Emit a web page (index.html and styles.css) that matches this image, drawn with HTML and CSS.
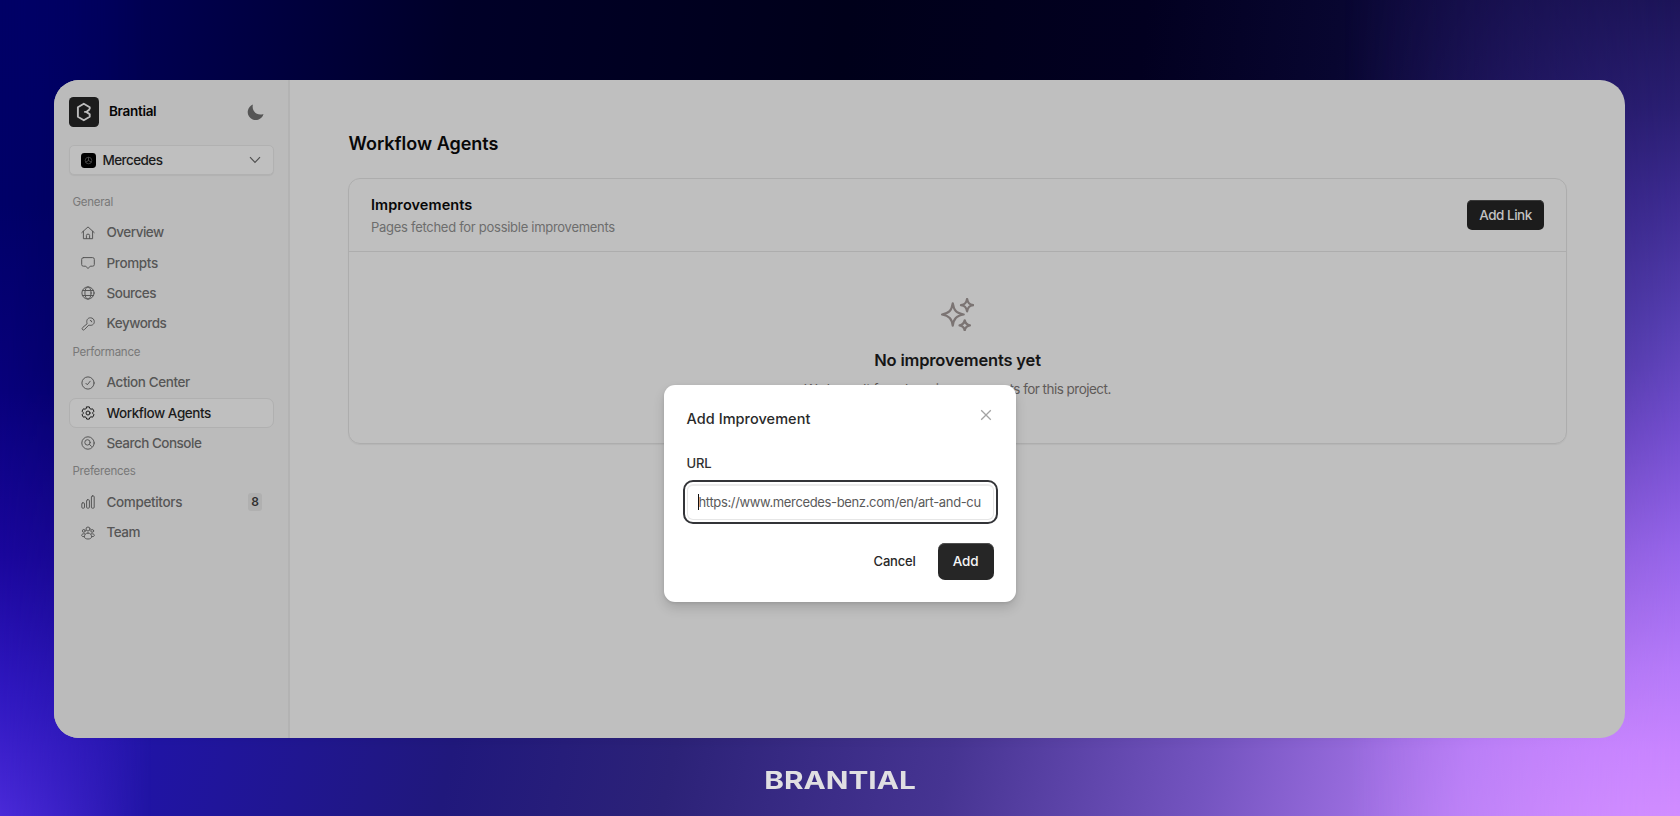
FILE: index.html
```html
<!DOCTYPE html>
<html lang="en">
<head>
<meta charset="utf-8">
<title>Brantial</title>
<link rel="stylesheet" href="styles.css">
</head>
<body>
<div class="stage">
  <div class="glow glow-bottom"></div>
  <div class="glow glow-left"></div>
  <div class="glow glow-right"></div>
  <div class="window">
    <aside class="sidebar">
      <div class="brand">
        <svg class="brand-logo" viewBox="0 0 30 30"><rect width="30" height="30" rx="4.5" fill="#1c1c1c"/><path d="M20.7 12.2V10.3L14.8 6.8L8.9 10.2V19.7L14.8 23.2L20.7 19.8V17.2L17.3 14.9L20.7 12.2M17.3 14.9H15.2" fill="none" stroke="#bcbcbc" stroke-width="1.9" stroke-linejoin="round"/></svg>
        <span class="brand-name">Brantial</span>
        <svg class="moon" viewBox="0 0 16 16"><path d="M4.9.6A8 8 0 1 0 15.5 9.9C10 12.200 3.200 7.800 4.900.6Z" fill="#555"/></svg>
      </div>
      <div class="project">
        <svg class="project-logo" viewBox="0 0 15 15"><rect width="15" height="15" rx="3.4" fill="#000"/><circle cx="7.5" cy="7.5" r="3.3" fill="none" stroke="#555" stroke-width=".7"/><path d="M7.5 4.2V7.5L4.7 9.2M7.5 7.5L10.3 9.2" fill="none" stroke="#666" stroke-width=".7"/></svg>
        <span class="project-name">Mercedes</span>
        <svg class="chevron" viewBox="0 0 12 8"><path d="M1 1.2L6 6.4L11 1.2" fill="none" stroke="#505050" stroke-width="1.2"/></svg>
      </div>
      <nav class="nav">
        <h4 class="group">General</h4>
        <a class="item"><svg class="icon" viewBox="0 0 14 14"><path d="M.8 6.6L7 .9L13.2 6.6M2.4 5.3V12.7H11.6V5.3M5.4 12.6V9.4Q5.4 8.1 7 8.1T8.6 9.4V12.6"/></svg><span>Overview</span></a>
        <a class="item"><svg class="icon" viewBox="0 0 14 14"><path d="M2.4 1.6H11.6Q13.3 1.6 13.3 3.3V8.6Q13.3 10.2 11.6 10.2H9.2L7 12.6L4.8 10.2H2.4Q.7 10.2.7 8.6V3.3Q.7 1.6 2.4 1.6Z"/></svg><span class="prompts">Prompts</span></a>
        <a class="item"><svg class="icon" viewBox="0 0 14 14"><circle cx="7" cy="7" r="6.1"/><ellipse cx="7" cy="7" rx="3.1" ry="6.1"/><path d="M1.6 4.5H12.4M1.6 9.5H12.4"/></svg><span>Sources</span></a>
        <a class="item"><svg class="icon" viewBox="0 0 14 14"><path d="M6 6.4C5 3.3 6.7.8 9.4.8C11.7.8 13.3 2.4 13.3 4.7C13.3 7.5 10.7 9 7.8 8.1L3.4 12.6Q2.5 13.5 1.5 12.6Q.6 11.6 1.5 10.7ZM9.3 3.4Q10.7 3.3 10.8 4.8"/></svg><span>Keywords</span></a>
        <h4 class="group">Performance</h4>
        <a class="item"><svg class="icon" viewBox="0 0 14 14"><circle cx="7" cy="7" r="6.1"/><path d="M4.9 7.3L6.3 8.8L9.2 5.2"/></svg><span class="action">Action Center</span></a>
        <a class="item active"><svg class="icon" viewBox="0 0 14 14"><path d="M5.7.9H8.3L8.8 2.5L10 3.2L11.6 2.8L13 5.2L11.8 6.4V7.6L13 8.8L11.6 11.2L10 10.8L8.8 11.5L8.3 13.1H5.7L5.2 11.5L4 10.8L2.4 11.2L1 8.8L2.2 7.6V6.4L1 5.2L2.4 2.8L4 3.2L5.2 2.5Z"/><circle cx="7" cy="7" r="2"/></svg><span>Workflow Agents</span></a>
        <a class="item"><svg class="icon" viewBox="0 0 14 14"><circle cx="7" cy="7" r="6.2"/><circle cx="6.5" cy="6.4" r="2.7"/><path d="M8.5 8.4L10.5 10.4"/></svg><span>Search Console</span></a>
        <h4 class="group">Preferences</h4>
        <a class="item"><svg class="icon" viewBox="0 0 14 14"><rect x=".8" y="7.8" width="2.7" height="5.4" rx="1"/><rect x="5.6" y="4.7" width="2.8" height="8.5" rx="1"/><rect x="10.4" y=".9" width="2.8" height="12.3" rx="1"/></svg><span class="competitors">Competitors</span><b class="count">8</b></a>
        <a class="item"><svg class="icon" viewBox="0 0 14 14"><circle cx="7" cy="3" r="2"/><circle cx="2.8" cy="4.9" r="1.4"/><circle cx="11.2" cy="4.9" r="1.4"/><path d="M7 7C4.6 7 3.5 8.7 3.4 10.8C3.4 12.2 5 13 7 13S10.6 12.2 10.6 10.8C10.5 8.7 9.4 7 7 7ZM3.8 7.8H2.4C1.3 7.8.7 8.6.7 9.6Q.7 10.8 3.2 10.7M10.2 7.8H11.6C12.7 7.8 13.3 8.6 13.3 9.6Q13.3 10.8 10.8 10.7"/></svg><span>Team</span></a>
      </nav>
    </aside>
    <main class="main">
      <h1 class="title">Workflow Agents</h1>
      <section class="card">
        <header class="card-head">
          <div class="card-text">
            <h2 class="card-title">Improvements</h2>
            <p class="card-sub">Pages fetched for possible improvements</p>
          </div>
          <button class="btn-link">Add Link</button>
        </header>
        <div class="empty">
          <svg class="sparkles" viewBox="0 0 32 32"><path d="M11.4 5.2C12.5 12 14.6 14.5 22 16C14.6 17.5 12.5 20 11.4 26.8C10.3 20 8.2 17.5 1 16C8.2 14.5 10.3 12 11.4 5.2ZM25.3 1C26 5 27.3 6.3 31.2 7C27.3 7.7 26 9 25.3 13C24.6 9 23.3 7.7 19.4 7C23.3 6.3 24.6 5 25.3 1ZM23 21.6C23.6 24.9 24.7 26 28 26.5C24.7 27 23.6 28.1 23 31.4C22.4 28.1 21.3 27 18 26.5C21.3 26 22.4 24.9 23 21.6Z"/></svg>
          <h3 class="empty-title">No improvements yet</h3>
          <p class="empty-text">We haven't found any improvements for this project.</p>
        </div>
      </section>
    </main>
  </div>
  <div class="wordmark"><span>BRANTIAL</span></div>
  <div class="dialog">
    <div class="dialog-head">
      <h2 class="dialog-title">Add Improvement</h2>
      <svg class="close" viewBox="0 0 12 12"><path d="M1.2 1.2L10.8 10.8M10.8 1.2L1.2 10.8" fill="none" stroke="#a3a3a3" stroke-width="1.3"/></svg>
    </div>
    <label class="label">URL</label>
    <div class="field"><div class="field-inner"><i class="caret"></i><span class="url">https://www.mercedes-benz.com/en/art-and-cu</span></div></div>
    <div class="actions">
      <button class="btn-cancel">Cancel</button>
      <button class="btn-add">Add</button>
    </div>
  </div>
</div>
</body>
</html>
```
FILE: styles.css
```css
* { box-sizing: border-box; }
body { margin: 0; font-family: Inter, "Liberation Sans", sans-serif; }
h1, h2, h3, h4, p { margin: 0; }
button { border: 0; padding: 0; font-family: inherit; }

.stage {
  position: relative;
  width: 1680px;
  height: 816px;
  overflow: hidden;
  padding: 80px 55px 0 54px;
  background: linear-gradient(96deg, #000066 0%, #000048 12%, #000028 26%, #00001a 48%, #020020 65%, #080630 76%, #160f4c 86%, #221866 100%);
}
.glow { position: absolute; inset: 0; }
.glow-bottom {
  background: linear-gradient(102deg, #4628d4 0%, #2c16b8 8%, #2014a4 17%, #20187c 33%, #2c2278 45%, #463492 60%, #7454c0 74%, #b27cf2 88%, #cf8cff 100%);
  -webkit-mask-image: linear-gradient(180deg, transparent 45%, #000 92%);
  mask-image: linear-gradient(180deg, transparent 45%, #000 92%);
}
.glow-left {
  background: linear-gradient(180deg, #000066 0%, #000068 25%, #08007c 48%, #1a069c 68%, #3018c0 85%, #4a2ad8 100%);
  -webkit-mask-image: linear-gradient(90deg, #000 0, transparent 9%);
  mask-image: linear-gradient(90deg, #000 0, transparent 9%);
}
.glow-right {
  background: linear-gradient(180deg, #1c1458 0%, #2a1e72 13%, #3c2a90 24%, #5840b4 40%, #744ed0 53%, #9664ea 67%, #b67afa 82%, #c884ff 92%, #d08cff 100%);
  -webkit-mask-image: linear-gradient(90deg, transparent 80%, #000 100%);
  mask-image: linear-gradient(90deg, transparent 80%, #000 100%);
}

.window {
  position: relative;
  display: flex;
  height: 658px;
  border-radius: 25px;
  overflow: hidden;
  background: #bfbfbf;
}
.sidebar {
  flex: none;
  width: 236px;
  padding: 17px 14px 0 15px;
  background: #bbb;
  border-right: 2px solid #b3b3b3;
}
.brand { display: flex; align-items: center; height: 30px; }
.brand-logo { width: 30px; height: 30px; }
.brand-name { margin: -2px 0 0 10px; font-size: 13.5px; font-weight: 600; color: #050505; letter-spacing: -.3px; }
.moon { width: 16px; height: 16px; margin: 0 10px 0 auto; overflow: visible; }
.project {
  display: flex;
  align-items: center;
  height: 30px;
  margin-top: 18px;
  padding: 0 12.5px 0 11px;
  border: 1px solid #b1b1b1;
  border-radius: 5px;
  background: #bfbfbf;
  box-shadow: 0 1px 1px rgba(0, 0, 0, .05);
}
.project-logo { width: 15px; height: 15px; }
.project-name { margin-left: 6.5px; font-size: 13.5px; font-weight: 500; color: #1c1c1c; letter-spacing: -.58px; }
.chevron { width: 12px; height: 8px; margin-left: auto; }
.nav { display: flex; flex-direction: column; padding-top: 14px; }
.group {
  height: 26.7px;
  margin-bottom: 2px;
  padding-left: 3.5px;
  font-size: 11.5px;
  line-height: 26.7px;
  font-weight: 400;
  letter-spacing: -.25px;
  color: #787878;
}
.item {
  display: flex;
  align-items: center;
  height: 30.3px;
  padding: 0 12px 0 11px;
  border: 1px solid transparent;
  border-radius: 7px;
  font-size: 13.5px;
  font-weight: 500;
  letter-spacing: -.5px;
  color: #565656;
}
.item span { margin-top: -1px; }
.prompts { letter-spacing: -.35px; }
.action { letter-spacing: -.42px; }
.competitors { letter-spacing: -.35px; }
.active { color: #1b1b1b; background: #bfbfbf; border-color: #b0b0b0; letter-spacing: -.43px; }
.icon { flex: none; width: 14px; height: 14px; margin-right: 11.5px; fill: none; stroke: currentColor; stroke-width: 1; stroke-linejoin: round; stroke-linecap: round; }
.count {
  width: 14px;
  height: 18px;
  margin: 0 -1px 0 auto;
  border-radius: 3px;
  background: #b0b0b0;
  font-size: 12px;
  line-height: 18px;
  font-weight: 600;
  letter-spacing: 0;
  text-align: center;
  color: #303030;
}

.main { flex: 1; padding: 49px 58px 0 58px; }
.title { height: 30px; padding-left: .5px; font-size: 18px; line-height: 30px; font-weight: 600; color: #080808; }
.card { height: 266px; margin-top: 19px; border: 1px solid #adadad; border-radius: 12px; box-shadow: 0 1px 1px rgba(0, 0, 0, .05); }
.card-head { display: flex; align-items: center; justify-content: space-between; height: 73px; padding: 0 22px; border-bottom: 1px solid #adadad; }
.card-text { padding-top: 2px; }
.card-title { font-size: 14.5px; line-height: 22px; font-weight: 600; letter-spacing: .08px; color: #080808; }
.card-sub { font-size: 13px; line-height: 22px; letter-spacing: -.28px; color: #6d6d6d; }
.btn-link { width: 77px; height: 30px; border-radius: 5px; background: #1c1c1c; box-shadow: inset 0 1px 0 #3a3a3a; color: #c2c2c2; font-size: 13.5px; font-weight: 500; letter-spacing: -.5px; }
.empty { display: flex; flex-direction: column; align-items: center; padding-top: 46px; }
.sparkles { width: 33px; height: 33px; fill: none; stroke: #7b7473; stroke-width: 2.2; stroke-linejoin: round; }
.empty-title { margin-top: 17px; font-size: 16.5px; line-height: 24px; font-weight: 600; letter-spacing: -.17px; color: #161616; }
.empty-text { margin-top: 7px; font-size: 13.5px; line-height: 20px; letter-spacing: -.52px; color: #5f5b59; }

.wordmark { position: relative; display: flex; justify-content: center; padding: 28px 0 0 1px; }
.wordmark span { font-size: 24px; line-height: 29px; font-weight: 700; color: #e0dfe2; transform: scaleX(1.24); }

.dialog {
  position: absolute;
  left: 663.5px;
  top: 385px;
  width: 352.5px;
  height: 217px;
  padding: 24px 22.5px 0 23px;
  border-radius: 11px;
  background: #fff;
  box-shadow: 0 6px 12px rgba(0, 0, 0, .14), 0 1px 3px rgba(0, 0, 0, .1);
}
.dialog-head { display: flex; justify-content: space-between; height: 20px; }
.dialog-title { font-size: 14.5px; line-height: 20px; font-weight: 500; letter-spacing: .05px; color: #292929; }
.close { width: 12px; height: 12px; margin: 0 2px 0 0; }
.label { display: block; margin-top: 25px; font-size: 13px; line-height: 19px; font-weight: 500; letter-spacing: -.2px; color: #303030; }
.field { height: 44px; margin: 7px -4px 0; padding: 2px; border: 2px solid #333438; border-radius: 10px; }
.field-inner { display: flex; align-items: center; height: 36px; padding: 0 0 1px 10px; border: 1px solid #e6e6e6; border-top: 2px solid #ececec; border-radius: 6px; }
.caret { flex: none; width: 1px; height: 16px; background: #111; }
.url { font-size: 13px; letter-spacing: -.35px; white-space: nowrap; color: #5a5a5a; }
.actions { display: flex; justify-content: flex-end; align-items: center; margin-top: 18.5px; }
.btn-cancel { margin-right: 22px; background: none; font-size: 13px; font-weight: 500; letter-spacing: -.2px; color: #272727; }
.btn-add { width: 56px; height: 37px; border-radius: 7px; background: #262626; box-shadow: inset 0 1px 0 #505050; color: #f5f5f5; font-size: 13.5px; font-weight: 500; letter-spacing: -.2px; }
```
